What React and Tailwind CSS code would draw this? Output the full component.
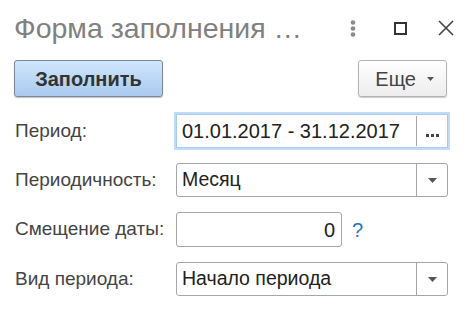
import React from 'react';

function DropArrow() {
  return (
    <svg width="9" height="5" viewBox="0 0 9 5" className="block">
      <path d="M0 0h9L4.5 5z" fill="#555" />
    </svg>
  );
}

function Select({ value }) {
  return (
    <div className="flex h-[34px] w-[272px] border border-[#a6a6a6] rounded-[3px] bg-white">
      <div className="flex-1 flex items-center pl-[5px] text-[19.5px] text-[#222]">{value}</div>
      <div className="w-[31px] border-l border-[#a6a6a6] flex items-center justify-center">
        <DropArrow />
      </div>
    </div>
  );
}

export default function App() {
  return (
    <div className="w-[469px] h-[310px] bg-white overflow-hidden font-['Liberation_Sans',Arial,sans-serif]">
      {/* header */}
      <div className="flex items-center h-[56px] pl-[14px]">
        <span className="text-[28.5px] text-[#808080] leading-none">Форма заполнения …</span>
        <div className="ml-auto flex items-center">
          <svg width="6" height="17" viewBox="0 0 6 17" className="mr-[38px]">
            <circle cx="3" cy="2.5" r="2.3" fill="#8a8a8a" />
            <circle cx="3" cy="8.5" r="2.3" fill="#8a8a8a" />
            <circle cx="3" cy="14.5" r="2.3" fill="#8a8a8a" />
          </svg>
          <svg width="13" height="13" viewBox="0 0 13 13" className="mr-[31px]">
            <rect x="1" y="1" width="11" height="11" fill="none" stroke="#333" strokeWidth="2" />
          </svg>
          <svg width="16" height="16" viewBox="0 0 16 16" className="mr-[15px]">
            <path d="M1 1L15 15M15 1L1 15" stroke="#444" strokeWidth="1.6" />
          </svg>
        </div>
      </div>

      {/* command bar */}
      <div className="flex items-center mt-[4px] pl-[14px] pr-[22px]">
        <button className="h-[37px] w-[149px] rounded-[3px] border border-[#7b8798] bg-gradient-to-b from-[#d0e6fc] to-[#a9caee] shadow-[0_1px_1px_rgba(0,0,0,0.25)] text-[20px] font-bold text-[#333]">
          Заполнить
        </button>
        <button className="ml-auto h-[37px] w-[89px] rounded-[3px] border border-[#b3b3b3] bg-gradient-to-b from-white to-[#ededed] shadow-[0_1px_1px_rgba(0,0,0,0.2)] flex items-center justify-end pr-[12px] gap-[11px] text-[20px] text-[#444]">
          <span>Еще</span>
          <svg width="7" height="4" viewBox="0 0 7 4"><path d="M0 0h7L3.5 4z" fill="#555" /></svg>
        </button>
      </div>

      {/* form */}
      <div className="mt-[17px] pl-[15px] flex flex-col gap-[15px]">
        <div className="flex items-center">
          <span className="w-[161px] text-[19px] text-[#444]">Период:</span>
          <div className="flex h-[34px] w-[272px] border border-[#a9cbf0] shadow-[0_0_0_2px_#c2dbf6] bg-white">
            <div className="flex-1 flex items-center pl-[5px] text-[20px] text-[#222]">01.01.2017 - 31.12.2017</div>
            <div className="w-[31px] my-[1px] border-l border-[#a6a6a6] flex items-center justify-center gap-[2px] pt-[8px]">
              <span className="w-[3px] h-[3px] bg-[#444]" />
              <span className="w-[3px] h-[3px] bg-[#444]" />
              <span className="w-[3px] h-[3px] bg-[#444]" />
            </div>
          </div>
        </div>

        <div className="flex items-center">
          <span className="w-[161px] text-[19px] text-[#444]">Периодичность:</span>
          <Select value="Месяц" />
        </div>

        <div className="flex items-center">
          <span className="w-[161px] text-[19px] text-[#444]">Смещение даты:</span>
          <div className="h-[35px] w-[166px] border border-[#a6a6a6] rounded-[3px] flex items-center justify-end pr-[6px] text-[20px] text-[#222]">0</div>
          <span className="ml-[10px] text-[20px] text-[#1f74c6]">?</span>
        </div>

        <div className="flex items-center">
          <span className="w-[161px] text-[19px] text-[#444]">Вид периода:</span>
          <Select value="Начало периода" />
        </div>
      </div>
    </div>
  );
}
